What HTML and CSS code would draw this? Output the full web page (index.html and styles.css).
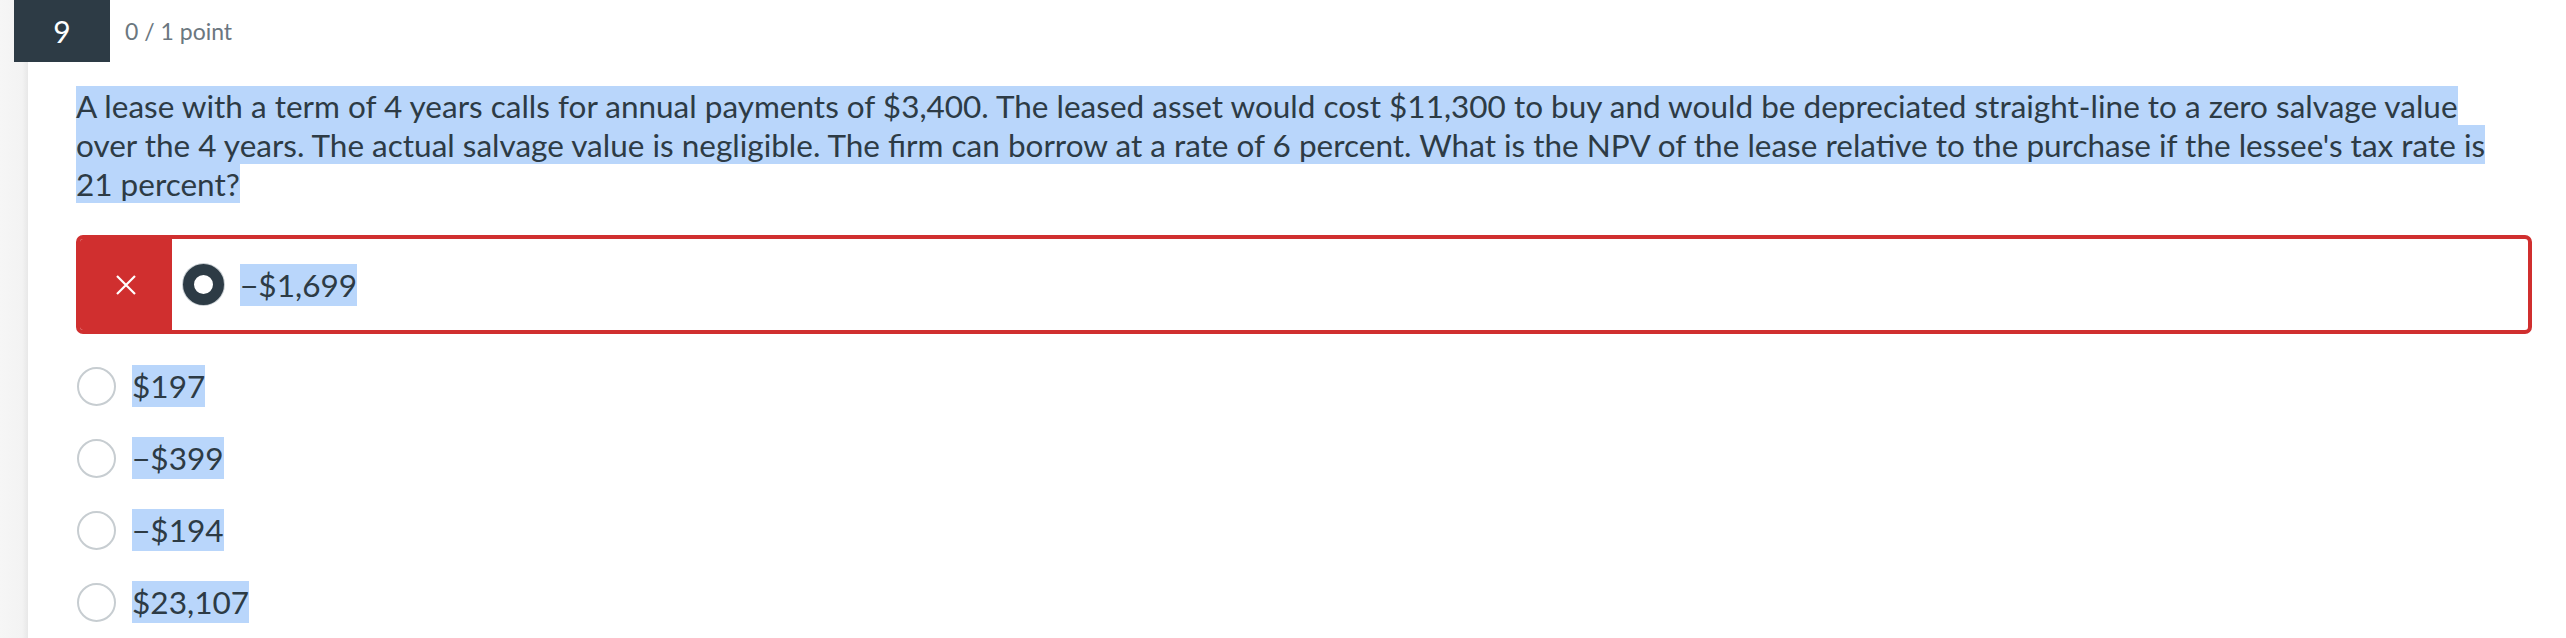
FILE: index.html
```html
<!DOCTYPE html>
<html lang="en">
<head>
<meta charset="utf-8">
<title>Question 9</title>
<link rel="stylesheet" href="styles.css">
</head>
<body>
<div class="page">
  <div class="header">
    <div class="qnum">9</div>
    <div class="points">0 / 1 point</div>
  </div>
  <div class="content">
    <p class="question"><span class="sel">A lease with a term of 4 years calls for annual payments of $3,400. The leased asset would cost $11,300 to buy and would be depreciated straight-line to a zero salvage value over the 4 years. The actual salvage value is negligible. The firm can borrow at a rate of 6 percent. What is the NPV of the lease relative to the purchase if the lessee's tax rate is 21 percent?</span></p>

    <div class="wrong">
      <div class="wrong-flag">
        <svg width="22" height="22" viewBox="0 0 22 22" aria-hidden="true">
          <path d="M2 2 L20 20 M20 2 L2 20" stroke="#ffffff" stroke-width="2.2" fill="none"/>
        </svg>
      </div>
      <div class="wrong-body">
        <span class="radio radio-on"></span>
        <span class="answer-text sel">&minus;$1,699</span>
      </div>
    </div>

    <div class="answers">
      <div class="answer"><span class="radio"></span><span class="answer-text sel">$197</span></div>
      <div class="answer"><span class="radio"></span><span class="answer-text sel">&minus;$399</span></div>
      <div class="answer"><span class="radio"></span><span class="answer-text sel">&minus;$194</span></div>
      <div class="answer"><span class="radio"></span><span class="answer-text sel">$23,107</span></div>
    </div>
  </div>
</div>
</body>
</html>
```

FILE: styles.css
```css
html, body {
  margin: 0;
  padding: 0;
}

body {
  width: 2566px;
  height: 638px;
  overflow: hidden;
  font-family: Lato, "Liberation Sans", sans-serif;
  color: #2d3b45;
  background: linear-gradient(to right, #f6f6f6 0, #f3f3f3 22px, #e8e8e8 28px, #ffffff 28px);
}

.page {
  display: flex;
  flex-direction: column;
}

.header {
  display: flex;
  align-items: center;
  height: 62px;
  padding-left: 14px;
  gap: 15px;
}

.qnum {
  width: 96px;
  height: 62px;
  background: #2d3b45;
  color: #ffffff;
  font-size: 30px;
  display: flex;
  align-items: center;
  justify-content: center;
}

.points {
  font-size: 23px;
  color: #6b7780;
}

.content {
  padding: 0 34px 0 76px;
  display: flex;
  flex-direction: column;
}

.question {
  margin: 24px 30px 0 0;
  font-size: 31.5px;
  line-height: 39px;
}

.sel {
  background: #b9d6fb;
  padding: 0.5px 0;
}

.wrong {
  margin-top: 32px;
  height: 99px;
  box-sizing: border-box;
  border: 4px solid #d02f2f;
  border-radius: 7px;
  display: flex;
  overflow: hidden;
}

.wrong-flag {
  width: 92px;
  background: #d02f2f;
  display: flex;
  align-items: center;
  justify-content: center;
  padding-left: 4px;
  margin-left: -4px;
}

.wrong-body {
  display: flex;
  align-items: center;
  padding-left: 11px;
  gap: 16px;
}

.radio {
  width: 39px;
  height: 39px;
  box-sizing: border-box;
  border-radius: 50%;
  border: 2px solid #c7cdd1;
  background: #ffffff;
  flex: none;
}

.radio-on {
  width: 41px;
  height: 41px;
  border: 11px solid #2d3b45;
  box-shadow: inset 0 0 0 1px #ffffff, 0 0 0 1px #c7cdd1;
}

.answer-text {
  font-size: 31.6px;
  line-height: 40px;
  padding: 1px 0;
}

.answers {
  margin-top: 32px;
  display: flex;
  flex-direction: column;
  gap: 32px;
}

.answer {
  display: flex;
  align-items: center;
  height: 40px;
  gap: 16px;
  padding-left: 1px;
}
```
